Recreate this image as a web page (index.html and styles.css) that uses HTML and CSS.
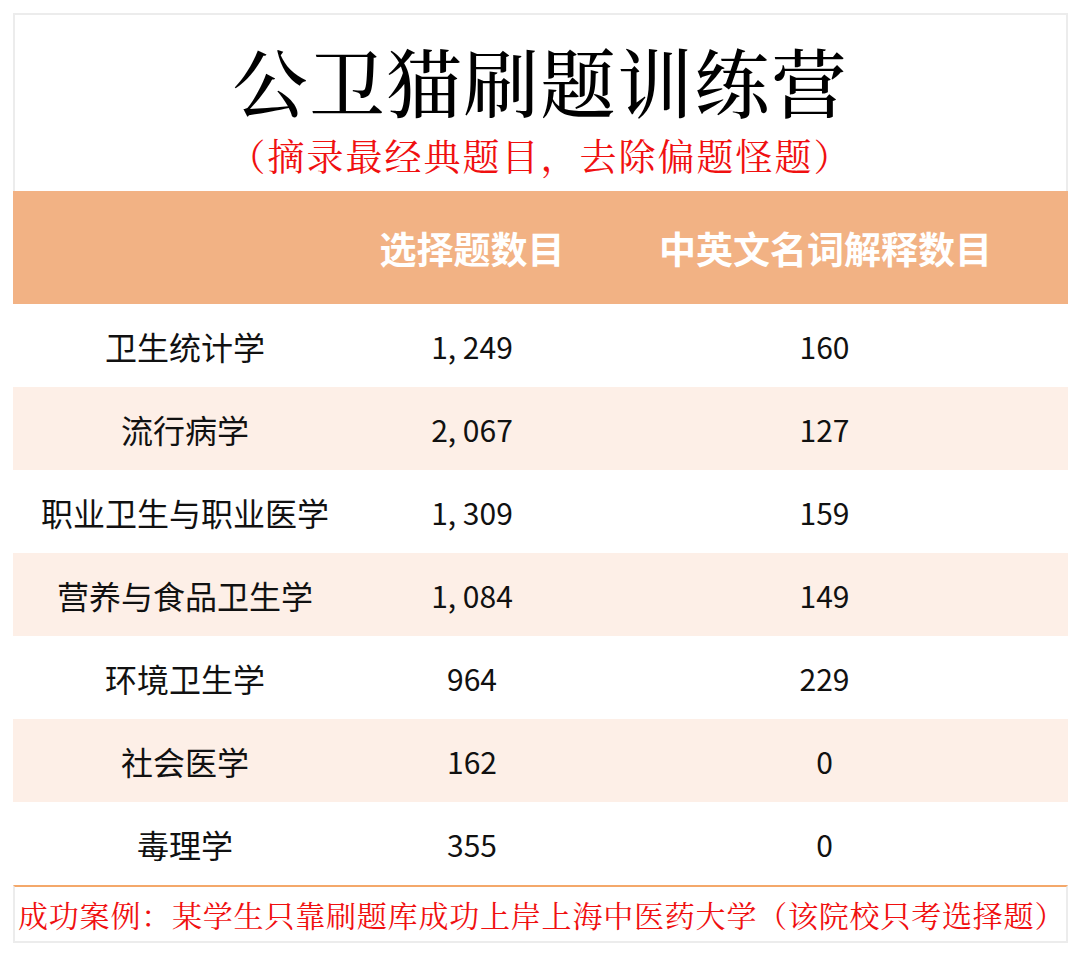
FILE: index.html
```html
<!DOCTYPE html>
<html lang="zh-CN">
<head>
<meta charset="utf-8">
<title>公卫猫刷题训练营</title>
<link rel="stylesheet" href="styles.css">
</head>
<body>
<div class="sheet">
  <header class="title-block">
    <h1 class="title">公卫猫刷题训练营</h1>
    <p class="subtitle">（摘录最经典题目，去除偏题怪题）</p>
  </header>
  <div class="table">
    <div class="row head">
      <div class="cell"></div>
      <div class="cell">选择题数目</div>
      <div class="cell">中英文名词解释数目</div>
    </div>
    <div class="row first">
      <div class="cell name">卫生统计学</div>
      <div class="cell num">1, 249</div>
      <div class="cell num">160</div>
    </div>
    <div class="row alt">
      <div class="cell name">流行病学</div>
      <div class="cell num">2, 067</div>
      <div class="cell num">127</div>
    </div>
    <div class="row">
      <div class="cell name">职业卫生与职业医学</div>
      <div class="cell num">1, 309</div>
      <div class="cell num">159</div>
    </div>
    <div class="row alt">
      <div class="cell name">营养与食品卫生学</div>
      <div class="cell num">1, 084</div>
      <div class="cell num">149</div>
    </div>
    <div class="row">
      <div class="cell name">环境卫生学</div>
      <div class="cell num">964</div>
      <div class="cell num">229</div>
    </div>
    <div class="row alt">
      <div class="cell name">社会医学</div>
      <div class="cell num">162</div>
      <div class="cell num">0</div>
    </div>
    <div class="row">
      <div class="cell name">毒理学</div>
      <div class="cell num">355</div>
      <div class="cell num">0</div>
    </div>
  </div>
  <footer class="note">成功案例：某学生只靠刷题库成功上岸上海中医药大学（该院校只考选择题）</footer>
</div>
</body>
</html>
```

FILE: styles.css
```css
html, body {
  margin: 0;
  padding: 0;
  background: #ffffff;
}

body {
  font-family: "Noto Sans CJK SC", "Noto Sans", sans-serif;
  color: #111111;
}

.sheet {
  margin: 13px 0 0 13px;
  width: 1055px;
}

.title-block {
  box-sizing: border-box;
  height: 178px;
  border: 2px solid #ececec;
  border-bottom: none;
  padding-top: 15px;
  text-align: center;
}

.title {
  margin: 0;
  font-family: "Noto Serif CJK SC", "Noto Sans CJK SC", serif;
  font-weight: 500;
  font-size: 75px;
  line-height: 100px;
  letter-spacing: 2px;
  color: #000000;
}

.subtitle {
  margin: 3px 0 0;
  font-family: "Noto Serif CJK SC", "Noto Sans CJK SC", serif;
  font-size: 37px;
  line-height: 44px;
  letter-spacing: 2px;
  color: #f01010;
}

.table {
  display: flex;
  flex-direction: column;
}

.row {
  display: grid;
  grid-template-columns: 344px 230px 1fr;
  height: 83px;
  align-items: center;
  background: #ffffff;
}

.row.alt {
  background: #fdefe7;
}

.row.head {
  height: 113px;
  background: #f2b284;
  color: #ffffff;
  font-weight: 700;
  font-size: 37px;
}

.cell {
  text-align: center;
  white-space: nowrap;
}

.row.head .cell:nth-child(3) {
  padding-right: 4px;
}

.name {
  font-size: 32px;
}

.num {
  font-size: 30px;
}

.row .num:nth-child(3) {
  padding-right: 6px;
}

.note {
  box-sizing: border-box;
  height: 58px;
  border-top: 2px solid #f4a86a;
  border-left: 2px solid #ececec;
  border-right: 2px solid #ececec;
  border-bottom: 2px solid #ececec;
  padding-left: 3px;
  display: flex;
  align-items: center;
  font-family: "Noto Serif CJK SC", "Noto Sans CJK SC", serif;
  font-size: 30px;
  letter-spacing: 0.8px;
  color: #f01010;
  white-space: nowrap;
}
```
